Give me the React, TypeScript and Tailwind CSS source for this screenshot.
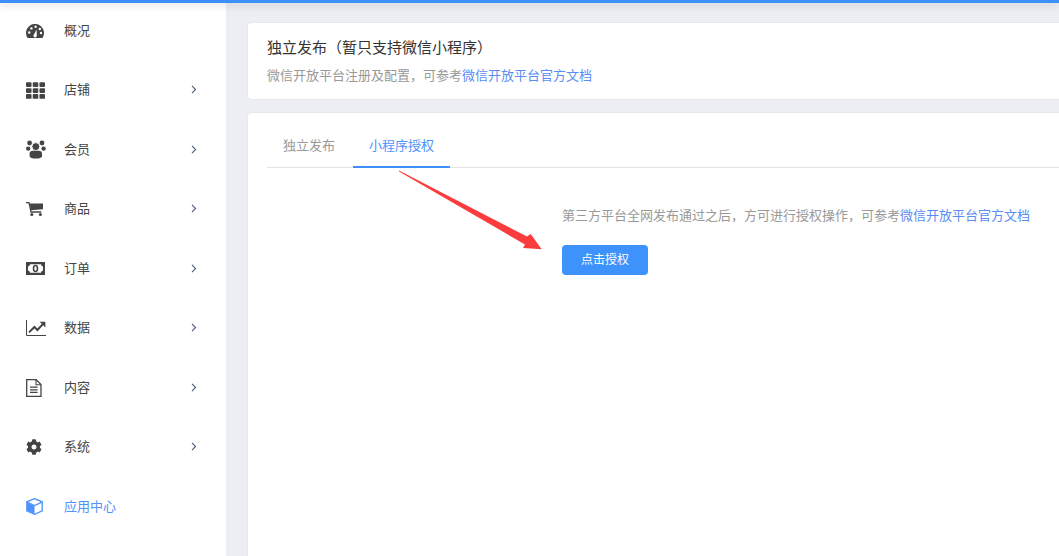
import { FaCog, FaTh } from "react-icons/fa";

const DashIcon = () => (
  <svg width="18" height="14" viewBox="0 0 18 14" fill="currentColor">
    <path d="M1.6 14A9 9 0 1 1 16.4 14Z" />
    <g fill="#fff">
      <circle cx="3.2" cy="8.5" r="1.2" />
      <circle cx="5.4" cy="4.4" r="1.2" />
      <circle cx="9.6" cy="2.8" r="1.2" />
      <circle cx="13.8" cy="5" r="1.2" />
      <circle cx="15" cy="9" r="1.2" />
      <path d="M7.4 11.6 10.6 5.6 10.8 11.8A1.7 1.7 0 1 1 7.4 11.6Z" />
    </g>
  </svg>
);

const UsersIcon = () => (
  <svg width="20" height="19" viewBox="0 0 20 19" fill="currentColor">
    <circle cx="3.6" cy="3" r="2.4" />
    <circle cx="16" cy="3" r="2.4" />
    <circle cx="2.2" cy="8.6" r="2.2" />
    <circle cx="17.6" cy="8.6" r="2.2" />
    <circle cx="9.8" cy="6.6" r="4" stroke="#fff" strokeWidth="1" />
    <path d="M3.6 16V13.6C3.6 11.6 5 10.8 6.6 10.8H13C14.6 10.8 16 11.6 16 13.6V16C16 17.8 13 18.6 9.8 18.6S3.6 17.8 3.6 16Z" />
  </svg>
);

const CartIcon = () => (
  <svg width="17" height="14" viewBox="0 0 17 14" fill="currentColor">
    <path d="M0 .6H3L5 10H15.2" fill="none" stroke="currentColor" strokeWidth="1.3" />
    <path d="M3.8 1.6H17V7.2L4.9 8.2Z" />
    <circle cx="5.8" cy="12.4" r="1.5" />
    <circle cx="14.4" cy="12.4" r="1.5" />
  </svg>
);

const MoneyIcon = () => (
  <svg width="19" height="13" viewBox="0 0 19 13">
    <rect width="19" height="13" fill="currentColor" />
    <path
      d="M4 2.2H15Q15 4.2 17 4.4V8.6Q15 8.8 15 10.8H4Q4 8.8 2 8.6V4.4Q4 4.2 4 2.2Z"
      fill="#fff"
    />
    <ellipse cx="9.5" cy="6.5" rx="2" ry="3" fill="none" stroke="currentColor" strokeWidth="1.6" />
  </svg>
);

const ChartIcon = () => (
  <svg width="20" height="16" viewBox="0 0 20 16" fill="none" stroke="currentColor">
    <path d="M.5 0V15.5H20" />
    <path d="M3 12.4 8.4 7 11.4 10 16.6 4.4" strokeWidth="2" />
    <path d="M13.6 1.8H19.4V7.4Z" fill="currentColor" stroke="none" />
  </svg>
);

const FileIcon = () => (
  <svg width="16" height="18" viewBox="0 0 16 18" fill="none" stroke="currentColor" strokeWidth="1.3">
    <path d="M.7.7H10.2L15 5.5V17.3H.7Z" />
    <path d="M10 .7V5.7H15" strokeWidth="1.1" />
    <path d="M4 8.2H11.6M4 10.8H11.6M4 13.4H11.6" />
  </svg>
);

const GearIcon = () => <FaCog className="text-[16px]" />;

const GridIcon = () => <FaTh className="text-[19px]" />;

const CubeIcon = () => (
  <svg width="17" height="17" viewBox="0 0 17 17" fill="none" stroke="currentColor" strokeWidth="1.3">
    <path d="M8.5.7 16.2 3.8V12.8L8.5 16.3.8 12.8V3.8Z" />
    <path d="M1 4.2 8.5 7.6 16 4.2" />
    <path d="M1 4.6 8.5 8V16L1 12.6Z" fill="currentColor" stroke="none" />
  </svg>
);

const Chevron = () => (
  <svg width="6" height="9" viewBox="0 0 6 9" fill="none" stroke="#4b5a7c" strokeWidth="1.1">
    <path d="M1 .8 4.6 4.5 1 8.2" />
  </svg>
);

const menuItems = [
  { label: "概况", icon: DashIcon, arrow: false },
  { label: "店铺", icon: GridIcon, arrow: true },
  { label: "会员", icon: UsersIcon, arrow: true },
  { label: "商品", icon: CartIcon, arrow: true },
  { label: "订单", icon: MoneyIcon, arrow: true },
  { label: "数据", icon: ChartIcon, arrow: true },
  { label: "内容", icon: FileIcon, arrow: true },
  { label: "系统", icon: GearIcon, arrow: true },
  { label: "应用中心", icon: CubeIcon, arrow: false, active: true },
];

const DocLink = () => <span className="text-[#5b8cf5]">微信开放平台官方文档</span>;

export default function App() {
  return (
    <div className="relative flex h-[556px] w-[1059px] overflow-hidden bg-[#eceef3] font-['Noto_Sans_CJK_SC','Liberation_Sans',sans-serif]">
      {/* top bar */}
      <div className="absolute inset-x-0 top-0 z-10 h-[3px] bg-[#3d8ffb] shadow-[0_2px_8px_rgba(0,0,0,0.2)]"></div>

      {/* sidebar */}
      <aside className="w-[226px] shrink-0 bg-white">
        <ul className="flex flex-col pt-[0.5px]">
          {menuItems.map((item) => {
            const Icon = item.icon;
            return (
              <li
                key={item.label}
                className={`flex h-[59.5px] items-center pl-[26px] pr-[29px] text-[13px] ${
                  item.active ? "text-[#4e93fb]" : "text-[#444444]"
                }`}
              >
                <span className="mt-[1px] flex w-[38px] shrink-0 items-center">
                  <Icon />
                </span>
                <span className="flex-1 pb-[2px]">{item.label}</span>
                {item.arrow && <Chevron />}
              </li>
            );
          })}
        </ul>
      </aside>

      {/* main */}
      <main className="flex min-w-0 flex-1 flex-col gap-3 pl-[21px] pt-[22px]">
        <section className="h-[78px] w-[830px] shrink-0 rounded border border-[#e6e8ec] bg-white pl-[19px] pt-[12px]">
          <h2 className="text-[15px] leading-[24px] text-[#333333]">
            独立发布（暂只支持微信小程序）
          </h2>
          <p className="mt-[5px] text-[13px] leading-[22px] text-[#999999]">
            微信开放平台注册及配置，可参考
            <DocLink />
          </p>
        </section>

        <section className="relative h-[460px] w-[830px] shrink-0 rounded-t border border-[#e6e8ec] bg-white pl-[19px] pt-[13px]">
          <div className="flex h-[42px] gap-[2px] border-b border-[#e4e4e4] text-[13px]">
            <div className="flex h-[42px] items-center px-4 pb-[4px] text-[#999999]">独立发布</div>
            <div className="flex h-[42px] items-center border-b-2 border-[#3d8ffb] px-4 pb-[2px] text-[#4e93fb]">
              小程序授权
            </div>
          </div>

          <div className="ml-[295px] mt-[36px] w-[520px]">
            <p className="text-[13px] leading-[22px] whitespace-nowrap text-[#999999]">
              第三方平台全网发布通过之后，方可进行授权操作，可参考
              <DocLink />
            </p>
            <button className="mt-[19px] flex h-[30px] w-[86px] items-center justify-center rounded bg-[#3d92fb] pb-[3px] text-xs text-white">
              点击授权
            </button>
          </div>

          {/* annotation arrow, section origin is 248,113 inside the border */}
          <svg
            className="absolute left-[130px] top-[50px]"
            width="170"
            height="90"
            viewBox="378 163 170 90"
          >
            <polygon
              points="399,170.6 527,236.5 530.7,234 541.7,249.3 523,248 525,244.5 399,171.6"
              fill="#fb3c3c"
            />
          </svg>
        </section>
      </main>
    </div>
  );
}
